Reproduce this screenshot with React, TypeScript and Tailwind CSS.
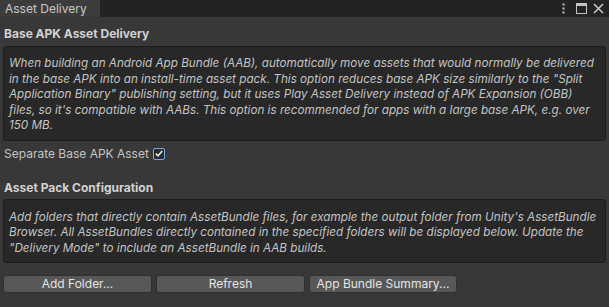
import React from "react";

const font = { fontFamily: "Inter, 'Liberation Sans', sans-serif" };

function Btn({ children, w }: { children: React.ReactNode; w: string }) {
  return (
    <div
      className={`${w} h-[18px] flex items-center justify-center rounded-[3px] bg-[#585858] border border-[#303030] text-[12px] text-[#e4e4e4] leading-none`}
    >
      {children}
    </div>
  );
}

export default function App() {
  return (
    <div className="w-[609px] h-[307px] bg-[#383838] flex flex-col overflow-hidden" style={font}>
      <div className="h-[17px] bg-[#232323] flex items-stretch">
        <div className="w-[100px] bg-[#3c3c3c] text-[12px] text-[#c8c8c8] pl-[5px] flex items-center leading-none">
          Asset Delivery
        </div>
        <div className="flex-1" />
        <div className="flex items-center gap-[6px] pr-[5px] text-[#c4c4c4]">
          <svg width="3" height="11" viewBox="0 0 3 11">
            <rect x="0.5" y="0.5" width="2" height="2" fill="#c4c4c4" />
            <rect x="0.5" y="4.5" width="2" height="2" fill="#c4c4c4" />
            <rect x="0.5" y="8.5" width="2" height="2" fill="#c4c4c4" />
          </svg>
          <svg width="11" height="11" viewBox="0 0 11 11" className="ml-[5px]">
            <rect x="0.5" y="0.5" width="10" height="10" fill="none" stroke="#c4c4c4" strokeWidth="1" />
            <rect x="0.5" y="0.5" width="10" height="2.5" fill="#c4c4c4" />
          </svg>
          <svg width="11" height="11" viewBox="0 0 11 11">
            <path d="M1 1 L10 10 M10 1 L1 10" stroke="#c4c4c4" strokeWidth="1.6" />
          </svg>
        </div>
      </div>
      <div className="flex flex-col px-[3px] pt-[9px]">
        <div className="text-[12px] font-bold text-[#d2d2d2] pl-[1px] leading-[16px]">Base APK Asset Delivery</div>
        <div className="mt-[4px] bg-[#282828] border border-[#1c1c1c] rounded-[3px] pl-[5px] pr-[6px] pt-[9px] pb-[6px] text-[11.7px] italic text-[#c4c4c4] leading-[15.5px]">
          When building an Android App Bundle (AAB), automatically move assets that would normally be delivered in the base APK into an install-time asset pack. This option reduces base APK size similarly to the "Split Application Binary" publishing setting, but it uses Play Asset Delivery instead of APK Expansion (OBB) files, so it's compatible with AABs. This option is recommended for apps with a large base APK, e.g. over 150 MB.
        </div>
        <div className="flex items-center h-[18px] mt-[4px] pl-[1px] text-[12px] text-[#c4c4c4]">
          <span>Separate Base APK Asset</span>
          <div className="ml-[4px] w-[12px] h-[12px] rounded-[2px] bg-[#2a2a2a] border border-[#7aa7e6] flex items-center justify-center">
            <svg width="8" height="7" viewBox="0 0 8 7">
              <path d="M0.8 3.6 L3 5.8 L7.2 1" stroke="#e6e6e6" strokeWidth="1.6" fill="none" />
            </svg>
          </div>
        </div>
        <div className="mt-[17px] text-[12px] font-bold text-[#d2d2d2] pl-[1px] leading-[16px]">Asset Pack Configuration</div>
        <div className="mt-[3px] bg-[#282828] border border-[#1c1c1c] rounded-[3px] pl-[5px] pr-[6px] pt-[10px] pb-[6px] text-[11.7px] italic text-[#c4c4c4] leading-[15.5px]">
          Add folders that directly contain AssetBundle files, for example the output folder from Unity's AssetBundle Browser. All AssetBundles directly contained in the specified folders will be displayed below. Update the "Delivery Mode" to include an AssetBundle in AAB builds.
        </div>
        <div className="flex gap-[4px] mt-[12px]">
          <Btn w="w-[149px]">Add Folder...</Btn>
          <Btn w="w-[149px]">Refresh</Btn>
          <Btn w="w-[148px]">App Bundle Summary...</Btn>
        </div>
      </div>
    </div>
  );
}
